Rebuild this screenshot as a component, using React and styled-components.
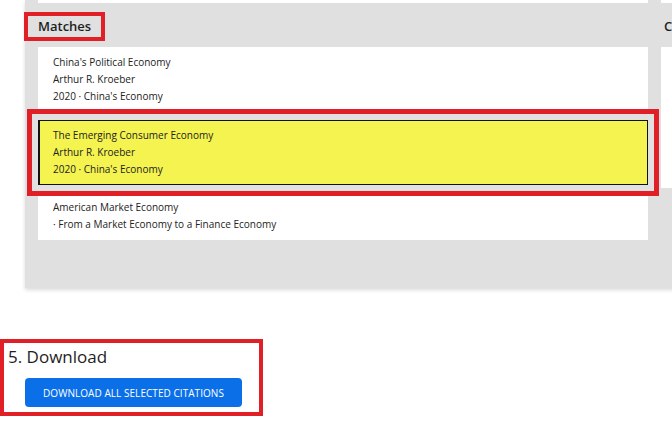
import React from 'react';
import styled, { createGlobalStyle } from 'styled-components';

const GlobalStyle = createGlobalStyle`
  html, body {
    margin: 0;
    padding: 0;
    background: #ffffff;
    overflow: hidden;
  }
  body {
    font-family: "Open Sans", "Liberation Sans", sans-serif;
    color: #222222;
  }
`;

const Page = styled.div`
  width: 672px;
  overflow: hidden;
  padding-bottom: 20px;
`;

const Panel = styled.section`
  margin-left: 25px;
  width: 1300px;
  background: #e0e0e0;
  padding: 0 0 48px 13px;
  box-shadow: 0 2px 4px rgba(0, 0, 0, 0.15);
  display: grid;
  grid-template-columns: 610px 600px;
  column-gap: 13px;
`;

const Column = styled.div`
  display: flex;
  flex-direction: column;
  align-items: flex-start;
`;

const PrevEdge = styled.div`
  align-self: stretch;
  height: 3px;
  background: #ffffff;
`;

const Heading = styled.h3`
  margin: 13px 0 10px -10px;
  padding: 3px 10px 3px ${(p) => (p.$marked ? 10 : 13)}px;
  font-size: 13px;
  line-height: 15px;
  font-weight: 600;
  color: #1e1e1e;
  outline: ${(p) => (p.$marked ? '4px solid #e11f26' : 'none')};
`;

const List = styled.div`
  align-self: stretch;
  background: #ffffff;
  min-height: ${(p) => p.$minHeight || 0}px;
`;

const Item = styled.div`
  padding: 7px 15px;
  font-size: 10px;
  line-height: 17px;
  color: #222222;

  ${(p) =>
    p.$selected &&
    `
    margin: 8px 0 7px;
    padding: 6px 15px 6px 13px;
    background: #f4f34f;
    border: 1px solid #111111;
    border-left-width: 2px;
    box-shadow: 0 0 0 6px #e2e0e0, 0 0 0 11px #e11f26;
  `}
`;

const Line = styled.div`
  white-space: nowrap;
`;

const DownloadBox = styled.section`
  margin-top: 51px;
  width: 263px;
  box-sizing: border-box;
  border: 4px solid #e11f26;
  padding: 2px 4px 5px;
`;

const StepTitle = styled.h2`
  margin: 0;
  font-size: 17px;
  line-height: 24px;
  font-weight: 500;
  color: #1e1e1e;
`;

const DownloadButton = styled.button`
  margin: 9px 0 0 17px;
  height: 29px;
  padding: 0 18px;
  border: none;
  border-radius: 4px;
  background: #0b70e8;
  color: #ffffff;
  font-family: "Open Sans", "Liberation Sans", sans-serif;
  font-size: 10px;
  text-transform: uppercase;
  letter-spacing: 0.05px;
  cursor: pointer;
`;

const matches = [
  { lines: ["China's Political Economy", 'Arthur R. Kroeber', "2020 · China's Economy"] },
  {
    lines: ['The Emerging Consumer Economy', 'Arthur R. Kroeber', "2020 · China's Economy"],
    selected: true,
  },
  { lines: ['American Market Economy', '· From a Market Economy to a Finance Economy'] },
];

export default function App() {
  return (
    <Page>
      <GlobalStyle />
      <Panel>
        <Column>
          <PrevEdge />
          <Heading $marked>Matches</Heading>
          <List>
            {matches.map((m, i) => (
              <Item key={i} $selected={m.selected}>
                {m.lines.map((l) => (
                  <Line key={l}>{l}</Line>
                ))}
              </Item>
            ))}
          </List>
        </Column>
        <Column>
          <PrevEdge />
          <Heading>Citations</Heading>
          <List $minHeight={141} />
        </Column>
      </Panel>
      <DownloadBox>
        <StepTitle>5. Download</StepTitle>
        <DownloadButton>Download all selected citations</DownloadButton>
      </DownloadBox>
    </Page>
  );
}
